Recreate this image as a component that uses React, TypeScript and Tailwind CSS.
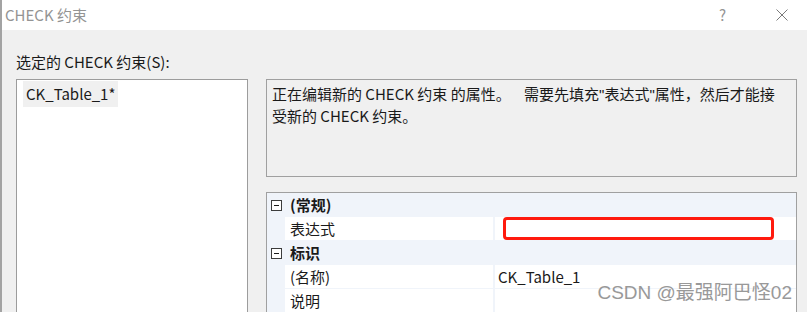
const font = "font-['Microsoft_YaHei','Noto_Sans_CJK_SC',sans-serif]";

function MinusBox() {
  return (
    <span className="flex h-[11px] w-[11px] items-center justify-center border border-[#3c3c3c] bg-white">
      <span className="h-px w-[5px] bg-[#1a1a1a]" />
    </span>
  );
}

function Category({ label }: { label: string }) {
  return (
    <div className="flex h-[24px] items-center bg-[#f0f4fa]">
      <div className="flex w-[18px] justify-center pl-[1px]">
        <MinusBox />
      </div>
      <span className="pl-[5px] font-bold">{label}</span>
    </div>
  );
}

function Row({ label, children }: { label: string; children?: React.ReactNode }) {
  return (
    <div className="flex h-[24px] bg-[#f0f4fa] pb-px">
      <div className="w-[18px] shrink-0" />
      <div className="flex w-[208px] shrink-0 items-center bg-white pl-[5px]">{label}</div>
      <div className="w-[2px] shrink-0" />
      <div className="flex flex-1 items-center bg-white pl-[3px]">{children}</div>
    </div>
  );
}

const q = "font-['Liberation_Sans',sans-serif]";

export default function App() {
  return (
    <div
      className={`relative flex h-[312px] w-[807px] flex-col overflow-hidden border-l-2 border-[#a3a3a3] text-[15px] leading-[20px] text-[#1a1a1a] ${font}`}
    >
      <div className="flex h-[30px] shrink-0 items-center bg-white pl-[3px] text-[#949494]">
        <span>CHECK 约束</span>
        <span className="ml-auto mr-[50px]">?</span>
        <svg className="mr-[19px]" width="12" height="12" viewBox="0 0 12 12">
          <path d="M0.5 0.5L11.5 11.5M11.5 0.5L0.5 11.5" stroke="#7a7a7a" strokeWidth="1" />
        </svg>
      </div>

      <div className="flex flex-1 flex-col bg-[#f0f0f0] pl-[14px] pr-[10px]">
        <div className="h-[49px] shrink-0 pt-[22px]">选定的 CHECK 约束(S):</div>
        <div className="flex flex-1 gap-[18px]">
          <div className="w-[232px] shrink-0 border border-[#9c9c9c] bg-white p-[1px] pl-[6px]">
            <div className="inline-flex h-[26px] items-center bg-[#f0f0f0] px-[3px]">CK_Table_1*</div>
          </div>

          <div className="flex flex-1 flex-col gap-[15px]">
            <div className="h-[98px] shrink-0 border border-[#a0a0a0] px-[5px] pt-[3px] leading-[21px] whitespace-nowrap">
              正在编辑新的 CHECK 约束 的属性。&nbsp;&nbsp;&nbsp;&nbsp;需要先填充<span className={q}>"</span>表达式
              <span className={q}>"</span>属性，然后才能接
              <br />
              受新的 CHECK 约束。
            </div>
            <div className="flex-1 border border-[#a0a0a0] bg-[#f0f4fa]">
              <Category label="(常规)" />
              <Row label="表达式">
                <div className="ml-[5px] h-[23px] w-[271px] rounded-[4px] border-[3px] border-[#ff1a0e]" />
              </Row>
              <Category label="标识" />
              <Row label="(名称)">CK_Table_1</Row>
              <Row label="说明" />
            </div>
          </div>
        </div>
      </div>

      <div className="absolute bottom-[8px] right-[15px] font-['Liberation_Sans','Noto_Sans_CJK_SC',sans-serif] text-[19px] leading-[22px] text-[#8e8e8e] opacity-90">
        CSDN @最强阿巴怪02
      </div>
    </div>
  );
}
